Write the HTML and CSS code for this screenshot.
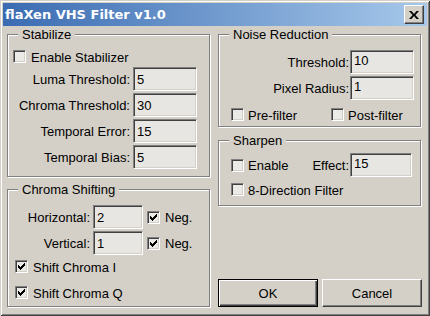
FILE: index.html
```html
<!DOCTYPE html>
<html>
<head>
<meta charset="utf-8">
<title>flaXen VHS Filter v1.0</title>
<link rel="stylesheet" href="styles.css">
</head>
<body>
<div class="window">
  <div class="titlebar">
    <span class="title">flaXen VHS Filter v1.0</span>
    <span class="close"><svg width="10" height="8" viewBox="0 0 10 8"><path d="M0 0H2.5L5 2.9L7.5 0H10L6.4 4L10 8H7.5L5 5.1L2.5 8H0L3.6 4Z" fill="#000"/></svg></span>
  </div>
  <div class="body">
    <div class="col col-left">
      <div class="group stab">
        <span class="legend">Stabilize</span>
        <div class="check"><span class="cb"></span><span class="ctext">Enable Stabilizer</span></div>
        <div class="field first"><span class="lbl">Luma Threshold:</span><span class="edit">5</span></div>
        <div class="field"><span class="lbl">Chroma Threshold:</span><span class="edit">30</span></div>
        <div class="field"><span class="lbl">Temporal Error:</span><span class="edit">15</span></div>
        <div class="field"><span class="lbl">Temporal Bias:</span><span class="edit">5</span></div>
      </div>
      <div class="group chroma">
        <span class="legend">Chroma Shifting</span>
        <div class="field"><span class="lbl">Horizontal:</span><span class="edit">2</span><div class="check neg"><span class="cb on"><svg width="11" height="11" viewBox="0 0 11 11"><path d="M2 4h1v3H2zM3 5h1v3H3zM4 6h1v3H4zM5 5h1v3H5zM6 4h1v3H6zM7 3h1v3H7zM8 2h1v3H8z" fill="#000"/></svg></span><span class="ctext">Neg.</span></div></div>
        <div class="field"><span class="lbl">Vertical:</span><span class="edit">1</span><div class="check neg"><span class="cb on"><svg width="11" height="11" viewBox="0 0 11 11"><path d="M2 4h1v3H2zM3 5h1v3H3zM4 6h1v3H4zM5 5h1v3H5zM6 4h1v3H6zM7 3h1v3H7zM8 2h1v3H8z" fill="#000"/></svg></span><span class="ctext">Neg.</span></div></div>
        <div class="check ci"><span class="cb on"><svg width="11" height="11" viewBox="0 0 11 11"><path d="M2 4h1v3H2zM3 5h1v3H3zM4 6h1v3H4zM5 5h1v3H5zM6 4h1v3H6zM7 3h1v3H7zM8 2h1v3H8z" fill="#000"/></svg></span><span class="ctext">Shift Chroma I</span></div>
        <div class="check cq"><span class="cb on"><svg width="11" height="11" viewBox="0 0 11 11"><path d="M2 4h1v3H2zM3 5h1v3H3zM4 6h1v3H4zM5 5h1v3H5zM6 4h1v3H6zM7 3h1v3H7zM8 2h1v3H8z" fill="#000"/></svg></span><span class="ctext">Shift Chroma Q</span></div>
      </div>
    </div>
    <div class="col col-right">
      <div class="group noise">
        <span class="legend">Noise Reduction</span>
        <div class="field"><span class="lbl">Threshold:</span><span class="edit">10</span></div>
        <div class="field"><span class="lbl">Pixel Radius:</span><span class="edit">1</span></div>
        <div class="checks">
          <div class="check pre"><span class="cb"></span><span class="ctext">Pre-filter</span></div>
          <div class="check"><span class="cb"></span><span class="ctext">Post-filter</span></div>
        </div>
      </div>
      <div class="group sharpen">
        <span class="legend">Sharpen</span>
        <div class="field">
          <div class="check en"><span class="cb"></span><span class="ctext">Enable</span></div>
          <span class="lbl">Effect:</span><span class="edit">15</span>
        </div>
        <div class="check dir"><span class="cb"></span><span class="ctext">8-Direction Filter</span></div>
      </div>
      <div class="buttons">
        <span class="btn default">OK</span>
        <span class="btn">Cancel</span>
      </div>
    </div>
  </div>
</div>
</body>
</html>
```

FILE: styles.css
```css
* { box-sizing: border-box; }
html, body { margin: 0; padding: 0; }
body {
  width: 430px;
  height: 316px;
  overflow: hidden;
  background: #d4d0c8;
  font-family: "Liberation Sans", Arial, sans-serif;
  font-size: 13px;
  color: #000;
}
.window {
  width: 430px;
  height: 316px;
  padding: 3px;
  display: flex;
  flex-direction: column;
  background: #d4d0c8;
  box-shadow: inset 1px 1px 0 #d4d0c8, inset -1px -1px 0 #404040, inset 2px 2px 0 #fff, inset -2px -2px 0 #808080;
}
.titlebar {
  flex: none;
  height: 23px;
  display: flex;
  align-items: center;
  padding: 0 3px 0 2px;
  background: linear-gradient(to right, #3b6cb2, #a6c8ea);
}
.title {
  flex: 1;
  color: #fff;
  font-family: "DejaVu Sans", sans-serif;
  font-weight: bold;
  font-size: 13px;
  line-height: 23px;
  white-space: nowrap;
}
.close {
  width: 20px;
  height: 19px;
  display: flex;
  align-items: center;
  justify-content: center;
  background: #d4d0c8;
  border-top: 1px solid #fff;
  border-left: 1px solid #fff;
  border-right: 1px solid #404040;
  border-bottom: 1px solid #404040;
  box-shadow: inset -1px -1px 0 #808080;
}
.body {
  flex: 1;
  display: flex;
  gap: 8px;
  padding: 8px 0 6px 4px;
}
.col {
  width: 203px;
  display: flex;
  flex-direction: column;
}
.col-left { gap: 12px; }
.group {
  position: relative;
  display: flex;
  flex-direction: column;
  border: 1px solid #808080;
  box-shadow: inset 1px 1px 0 #fff, 1px 1px 0 #fff;
}
.legend {
  position: absolute;
  top: -8px;
  left: 10px;
  padding: 0 4px;
  line-height: 15px;
  background: #d4d0c8;
  white-space: nowrap;
}
.check {
  display: flex;
  align-items: center;
  height: 13px;
  white-space: nowrap;
}
.cb {
  flex: none;
  width: 13px;
  height: 13px;
  background: #eceae6;
  border-top: 1px solid #808080;
  border-left: 1px solid #808080;
  border-right: 1px solid #fff;
  border-bottom: 1px solid #fff;
  box-shadow: inset 1px 1px 0 #404040, inset -1px -1px 0 #d4d0c8;
}
.cb svg { display: block; }
.ctext { margin-left: 5px; padding-top: 1px; line-height: 13px; }
.field {
  display: flex;
  align-items: center;
  height: 24px;
  margin-top: 2px;
}
.lbl {
  flex: none;
  text-align: right;
  white-space: nowrap;
}
.edit {
  flex: none;
  height: 24px;
  width: 64px;
  padding: 2px 0 0 3px;
  line-height: 20px;
  background: #e8e6e2;
  border-top: 1px solid #808080;
  border-left: 1px solid #808080;
  border-right: 1px solid #fff;
  border-bottom: 1px solid #fff;
  box-shadow: inset 1px 1px 0 #404040, inset -1px -1px 0 #d4d0c8;
}

/* Stabilize */
.stab { height: 143px; padding: 15px 0 0 5px; }
.stab .field.first { margin-top: 4px; }
.stab .lbl { width: 117px; margin-right: 3px; }

/* Chroma shifting */
.chroma { height: 118px; padding: 15px 0 0 7px; }
.chroma .field:first-of-type { margin-top: 0; }
.chroma .lbl { width: 75px; margin-right: 3px; }
.chroma .edit { width: 50px; }
.chroma .neg { margin-left: 4px; }
.chroma .ci { margin-top: 5px; }
.chroma .cq { margin-top: 13px; }

/* Noise reduction */
.noise { height: 93px; margin-bottom: 13px; padding: 13px 0 0 12px; }
.noise .lbl { width: 118px; margin-right: 1px; }
.noise .edit { padding-top: 0; }
.checks { display: flex; margin-top: 8px; }
.checks .pre { width: 100px; }
.noise .ctext, .sharpen .ctext { margin-left: 4px; }

/* Sharpen */
.sharpen { height: 66px; padding: 10px 0 0 12px; }
.sharpen .en { width: 80px; }
.sharpen .lbl { width: 38px; margin-right: 1px; }
.sharpen .edit { width: 62px; padding-top: 0; }
.sharpen .dir { margin-top: 6px; }

/* Buttons */
.buttons {
  margin-top: auto;
  display: flex;
  gap: 4px;
  width: 204px;
}
.btn {
  width: 100px;
  height: 28px;
  display: flex;
  align-items: center;
  justify-content: center;
  background: #d4d0c8;
  border-top: 1px solid #fff;
  border-left: 1px solid #fff;
  border-right: 1px solid #404040;
  border-bottom: 1px solid #404040;
  box-shadow: inset -1px -1px 0 #808080;
}
.btn.default {
  border: 1px solid #000;
  box-shadow: inset 1px 1px 0 #fff, inset -1px -1px 0 #404040, inset -2px -2px 0 #808080;
}
```
